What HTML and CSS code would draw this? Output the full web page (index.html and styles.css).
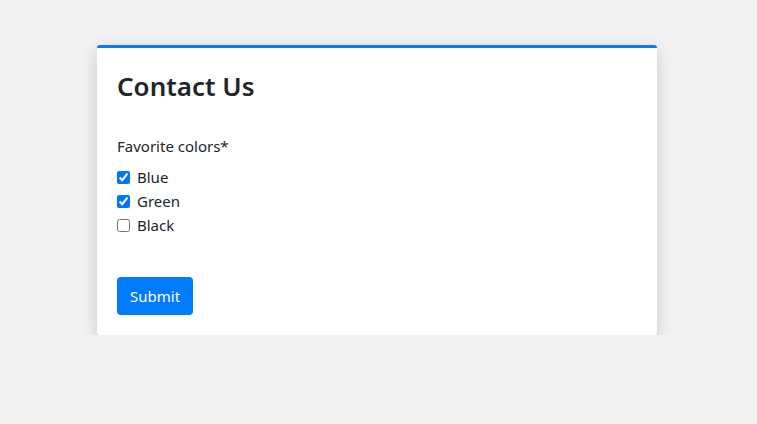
FILE: index.html
```html
<!DOCTYPE html>
<html lang="en">
<head>
    <meta charset="UTF-8">
    <meta name="viewport" content="width=device-width, initial-scale=1.0">
    <title>Contact Us</title>
    <link rel="stylesheet" href="styles.css">
</head>
<body>
    <div class="card">
        <h1 class="card-title">Contact Us</h1>
        <form class="contact-form">
            <div class="field">
                <div class="field-label">Favorite colors*</div>
                <label class="check"><input type="checkbox" name="colors" value="blue" checked> Blue</label>
                <label class="check"><input type="checkbox" name="colors" value="green" checked> Green</label>
                <label class="check"><input type="checkbox" name="colors" value="black"> Black</label>
            </div>
            <button type="submit" class="submit-button">Submit</button>
        </form>
    </div>
</body>
</html>
```

FILE: styles.css
```css
body {
    margin: 0;
    background: #f2f2f2;
    font-family: "Noto Sans", "Open Sans", Arial, sans-serif;
    color: #212529;
}

.card {
    width: 560px;
    margin: 45px 0 0 97px;
    padding: 20px;
    box-sizing: border-box;
    background: #fff;
    border-top: 3px solid #0d7bf0;
    border-radius: 3px;
    box-shadow: 0 5px 16px rgba(0, 0, 0, 0.18);
}

.card-title {
    margin: 0 0 30px;
    font-size: 26px;
    font-weight: 600;
    line-height: 36px;
}

.contact-form {
    display: flex;
    flex-direction: column;
    align-items: flex-start;
}

.field {
    display: flex;
    flex-direction: column;
    margin-bottom: 40px;
}

.field-label {
    font-size: 15px;
    line-height: 24px;
    margin-bottom: 7px;
}

.check {
    display: flex;
    align-items: center;
    gap: 7px;
    font-size: 15px;
    line-height: 24px;
}

.check input {
    margin: 0;
    width: 13px;
    height: 13px;
}

.submit-button {
    border: none;
    border-radius: 4px;
    background: #007bff;
    color: #fff;
    font-family: inherit;
    font-size: 15px;
    padding: 0 13px;
    height: 38px;
    cursor: pointer;
}
```
